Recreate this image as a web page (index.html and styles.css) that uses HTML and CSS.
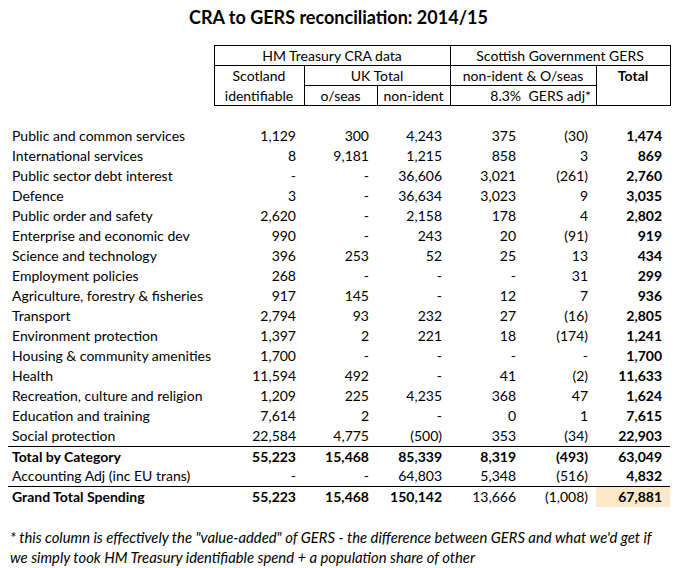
FILE: index.html
```html
<!DOCTYPE html>
<html>
<head>
<meta charset="utf-8">
<link rel="stylesheet" href="styles.css">
</head>
<body>
<div class="page">
  <h1 class="title">CRA to GERS reconciliation: 2014/15</h1>
  <table class="recon">
    <colgroup>
      <col class="c-label"><col class="c-scot"><col class="c-n"><col class="c-n"><col class="c-w"><col class="c-g"><col class="c-w">
    </colgroup>
    <thead>
      <tr class="hrow">
        <th class="blank"></th>
        <th class="hb" colspan="3">HM Treasury CRA data</th>
        <th class="hb" colspan="3">Scottish Government GERS</th>
      </tr>
      <tr class="hrow">
        <th class="blank"></th>
        <th class="hb no-b">Scotland</th>
        <th class="hb" colspan="2">UK Total</th>
        <th class="hb" colspan="2">non-ident &amp; O/seas</th>
        <th class="hb strong top" rowspan="2">Total</th>
      </tr>
      <tr class="hrow">
        <th class="blank"></th>
        <th class="hb no-t">identifiable</th>
        <th class="hb">o/seas</th>
        <th class="hb">non-ident</th>
        <th class="hb no-r right">8.3%</th>
        <th class="hb no-l">GERS adj*</th>
      </tr>
      <tr class="spacer"><th colspan="7"></th></tr>
    </thead>
    <tbody>
      <tr><td>Public and common services</td><td>1,129</td><td>300</td><td>4,243</td><td>375</td><td>(30)</td><td class="b">1,474</td></tr>
      <tr><td>International services</td><td>8</td><td>9,181</td><td>1,215</td><td>858</td><td>3</td><td class="b">869</td></tr>
      <tr><td>Public sector debt interest</td><td>-</td><td>-</td><td>36,606</td><td>3,021</td><td>(261)</td><td class="b">2,760</td></tr>
      <tr><td>Defence</td><td>3</td><td>-</td><td>36,634</td><td>3,023</td><td>9</td><td class="b">3,035</td></tr>
      <tr><td>Public order and safety</td><td>2,620</td><td>-</td><td>2,158</td><td>178</td><td>4</td><td class="b">2,802</td></tr>
      <tr><td>Enterprise and economic dev</td><td>990</td><td>-</td><td>243</td><td>20</td><td>(91)</td><td class="b">919</td></tr>
      <tr><td>Science and technology</td><td>396</td><td>253</td><td>52</td><td>25</td><td>13</td><td class="b">434</td></tr>
      <tr><td>Employment policies</td><td>268</td><td>-</td><td>-</td><td>-</td><td>31</td><td class="b">299</td></tr>
      <tr><td>Agriculture, forestry &amp; fisheries</td><td>917</td><td>145</td><td>-</td><td>12</td><td>7</td><td class="b">936</td></tr>
      <tr><td>Transport</td><td>2,794</td><td>93</td><td>232</td><td>27</td><td>(16)</td><td class="b">2,805</td></tr>
      <tr><td>Environment protection</td><td>1,397</td><td>2</td><td>221</td><td>18</td><td>(174)</td><td class="b">1,241</td></tr>
      <tr><td>Housing &amp; community amenities</td><td>1,700</td><td>-</td><td>-</td><td>-</td><td>-</td><td class="b">1,700</td></tr>
      <tr><td>Health</td><td>11,594</td><td>492</td><td>-</td><td>41</td><td>(2)</td><td class="b">11,633</td></tr>
      <tr><td>Recreation, culture and religion</td><td>1,209</td><td>225</td><td>4,235</td><td>368</td><td>47</td><td class="b">1,624</td></tr>
      <tr><td>Education and training</td><td>7,614</td><td>2</td><td>-</td><td>0</td><td>1</td><td class="b">7,615</td></tr>
      <tr><td>Social protection</td><td>22,584</td><td>4,775</td><td>(500)</td><td>353</td><td>(34)</td><td class="b">22,903</td></tr>
      <tr class="sep bold"><td>Total by Category</td><td>55,223</td><td>15,468</td><td>85,339</td><td>8,319</td><td>(493)</td><td>63,049</td></tr>
      <tr><td>Accounting Adj (inc EU trans)</td><td>-</td><td>-</td><td>64,803</td><td>5,348</td><td>(516)</td><td class="b">4,832</td></tr>
      <tr class="sep grand"><td class="b">Grand Total Spending</td><td class="b">55,223</td><td class="b">15,468</td><td class="b">150,142</td><td>13,666</td><td>(1,008)</td><td class="b hl">67,881</td></tr>
    </tbody>
  </table>
  <p class="note">* this column is effectively the "value-added" of GERS - the difference between GERS and what we'd get if<br>we simply took HM Treasury identifiable spend + a population share of other</p>
</div>
</body>
</html>
```

FILE: styles.css
```css
html, body {
  margin: 0;
  padding: 0;
  background: #fff;
}
body {
  font-family: "Lato", "Open Sans", sans-serif;
  font-size: 14px;
  color: #000;
}
.page {
  width: 677px;
}
.title {
  margin: 0;
  height: 45px;
  line-height: 34px;
  font-size: 18px;
  font-weight: 700;
  text-align: center;
}
.recon {
  border-collapse: collapse;
  margin-left: 8px;
  table-layout: fixed;
  width: 662px;
}
.c-label { width: 206px; }
.c-scot { width: 90px; }
.c-n { width: 73px; }
.c-w { width: 74px; }
.c-g { width: 72px; }
.recon th, .recon td {
  padding: 0;
  height: 20px;
  line-height: 20px;
  white-space: nowrap;
  overflow: hidden;
}
.recon th {
  font-weight: 400;
  text-align: center;
}
.recon tr.hrow th {
  height: 19px;
  line-height: 19px;
}
.recon th.blank { border: none; }
.recon th.hb {
  border: 1px solid #000;
}
.recon th.no-b { border-bottom: none; }
.recon th.no-t { border-top: none; }
.recon th.no-r { border-right: none; }
.recon th.no-l { border-left: none; }
.recon th.right { text-align: right; padding-right: 3px; }
.recon th.strong { font-weight: 700; }
.recon th.top { vertical-align: top; }
.recon tr.spacer th { height: 20px; }
.recon td {
  text-align: right;
  padding-right: 8px;
}
.recon td:first-child {
  text-align: left;
  padding-left: 4px;
  padding-right: 0;
}
.recon td.b { font-weight: 700; }
.recon tr.bold td { font-weight: 700; }
.recon tr.sep td {
  border-top: 1px solid #000;
  height: 19px;
  line-height: 19px;
}
.recon tr.grand td {
  height: 20px;
  line-height: 20px;
}
.recon td.hl { background: #fce9c8; }
.note {
  margin: 20px 0 0 10px;
  font-style: italic;
  font-size: 14.8px;
  line-height: 20px;
}
```
